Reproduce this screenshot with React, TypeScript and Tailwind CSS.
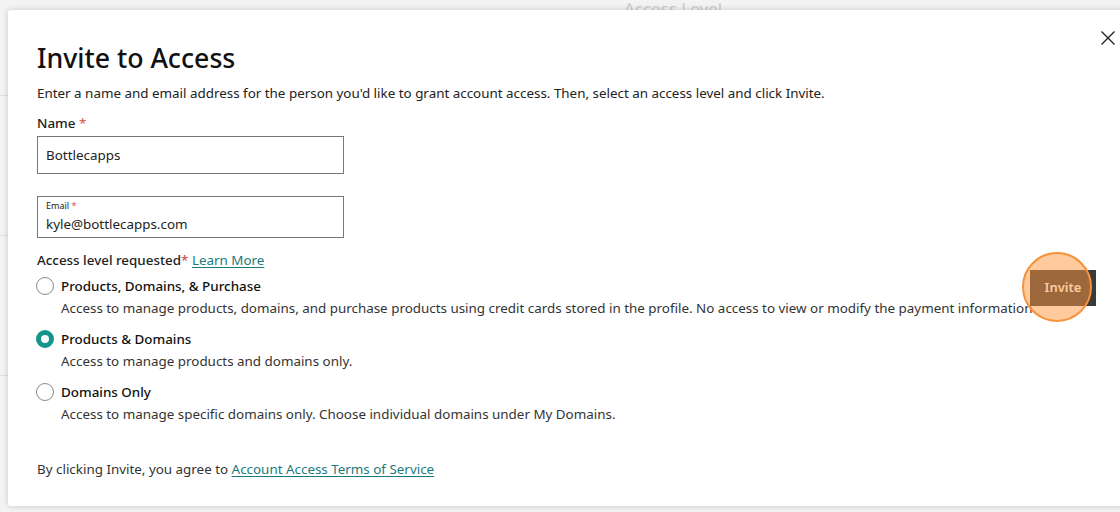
import React, { useState } from 'react';

const font = { fontFamily: '"Noto Sans", "Open Sans", Arial, sans-serif' };

export default function App() {
  const [level, setLevel] = useState(1);

  const options = [
    {
      title: 'Products, Domains, & Purchase',
      text: 'Access to manage products, domains, and purchase products using credit cards stored in the profile. No access to view or modify the payment information.',
    },
    { title: 'Products & Domains', text: 'Access to manage products and domains only.' },
    {
      title: 'Domains Only',
      text: 'Access to manage specific domains only. Choose individual domains under My Domains.',
    },
  ];

  return (
    <div className="relative w-[1120px] h-[512px] overflow-hidden bg-[#f3f3f3]" style={font}>
      {/* page behind the dialog */}
      <div className="flex justify-center pl-[226px] h-[18px]">
        <span className="text-[17px] leading-[18px] text-[#cbcbcb]">Access Level</span>
      </div>
      <div className="flex flex-col w-[8px]">
        <div className="h-[78px] border-b border-[#dedede]" />
        <div className="h-[140px] border-b border-[#dedede]" />
        <div className="h-[140px] border-b border-[#dedede]" />
      </div>

      {/* dialog */}
      <div className="absolute left-[8px] top-[10px] right-[-20px] bottom-[6px] bg-white rounded-l-[3px] shadow-[0_0_6px_rgba(0,0,0,0.18)]">
        <button className="absolute right-[24px] top-[20px] text-[#222]">
          <svg width="16" height="16" viewBox="0 0 16 16" fill="none" stroke="currentColor" strokeWidth="1.4">
            <path d="M1.5 1.5 L14.5 14.5 M14.5 1.5 L1.5 14.5" />
          </svg>
        </button>

        <div className="pl-[29px] pt-[31px] text-[#111]">
          <h1 className="text-[26.7px] leading-[34px] font-medium text-[#111]">Invite to Access</h1>
          <p className="mt-[10px] text-[13.4px] leading-[17px] text-[#222]">
            Enter a name and email address for the person you'd like to grant account access. Then, select an access level and click Invite.
          </p>

          <div className="mt-[13px] text-[13.4px] leading-[17px] font-medium text-[#222]">
            Name <span className="text-[#d9534a] font-normal">*</span>
          </div>
          <div className="mt-[4px] w-[307px] h-[38px] border border-[#777] flex items-center px-[8px] text-[13.4px] text-[#222]">
            Bottlecapps
          </div>

          <div className="mt-[22px] w-[307px] h-[42px] border border-[#777] flex flex-col px-[8px] pt-[3px]">
            <span className="text-[9px] leading-[12px] text-[#222]">
              Email <span className="text-[#d9534a]">*</span>
            </span>
            <span className="text-[13.4px] leading-[18px] mt-[3px] text-[#222]">kyle@bottlecapps.com</span>
          </div>

          <div className="mt-[14px] text-[13.4px] leading-[17px] text-[#222] font-medium">
            Access level requested<span className="text-[#d9534a]">*</span>{' '}
            <a className="text-[#1b7b7c] underline underline-offset-2 font-normal">Learn More</a>
          </div>

          <div className="mt-[8px] flex flex-col gap-[13px]">
            {options.map((o, i) => (
              <div key={o.title} className="flex flex-col" onClick={() => setLevel(i)}>
                <div className="flex items-center gap-[7px] -ml-[1px]">
                  {level === i ? (
                    <span className="w-[18px] h-[18px] rounded-full border-[5px] border-[#14958c] bg-white" />
                  ) : (
                    <span className="w-[18px] h-[18px] rounded-full border border-[#8a8a8a] bg-white" />
                  )}
                  <span className="text-[13.4px] leading-[18px] font-medium text-[#111]">{o.title}</span>
                </div>
                <p className="ml-[24px] mt-[5px] text-[13.4px] leading-[17px] text-[#333]">{o.text}</p>
              </div>
            ))}
          </div>

          <p className="mt-[38px] text-[13.4px] leading-[17px] text-[#333]">
            By clicking Invite, you agree to{' '}
            <a className="text-[#1b7b7c] underline underline-offset-2">Account Access Terms of Service</a>
          </p>
        </div>

        {/* Invite button with highlight */}
        <div className="absolute left-[1022px] top-[260px] w-[66px] h-[36px] bg-[#3a3a3a] flex items-center justify-center">
          <span className="text-[13px] font-semibold text-white">Invite</span>
        </div>
        <div className="absolute left-[1014px] top-[242px] w-[70px] h-[70px] rounded-full border-2 border-[#f6923a] bg-[rgba(255,150,60,0.5)]" />
      </div>
    </div>
  );
}
